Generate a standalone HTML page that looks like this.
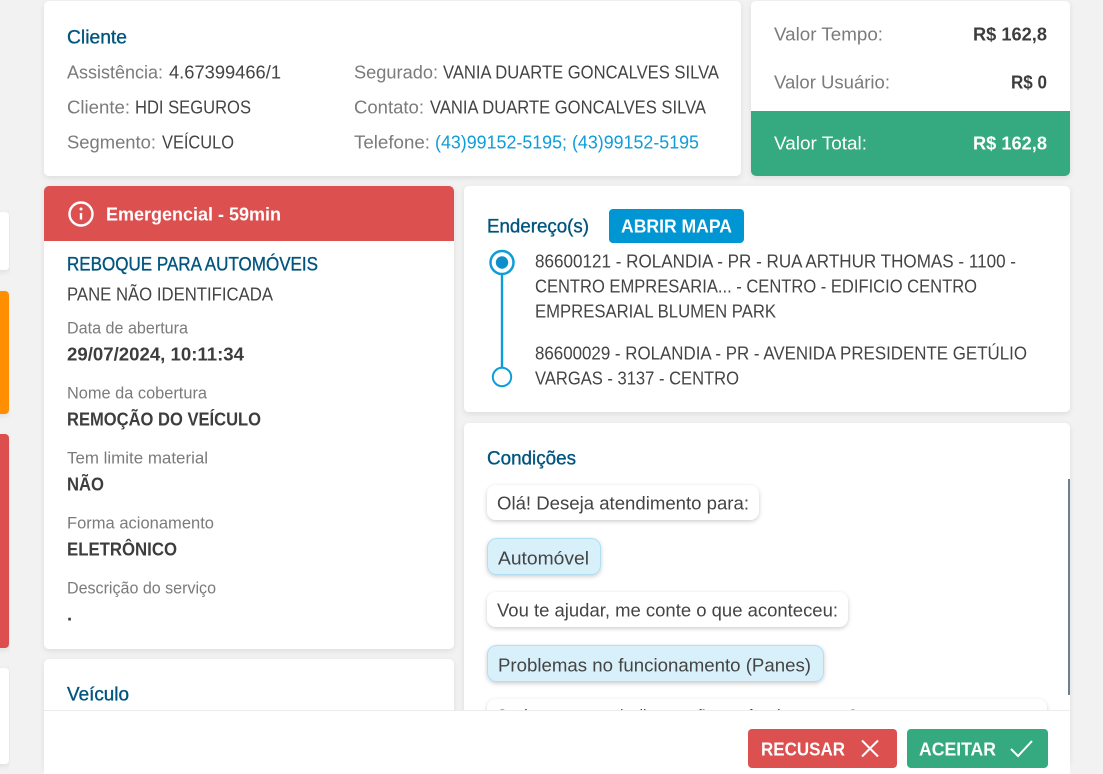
<!DOCTYPE html>
<html lang="pt"><head><meta charset="utf-8"><title>Serviço</title>
<style>
html,body{margin:0;padding:0;background:#f2f2f2;width:1103px;height:774px;overflow:hidden}
svg{position:absolute;left:0;top:0;display:block}
text{font-family:"Liberation Sans",sans-serif;font-size:18.5px;fill:#444;transform:translateY(-.5px)}
.g{fill:#7b7b7b}.h{fill:#00557f;font-size:19px;stroke:#00557f;stroke-width:.35px}
.s{font-size:16.5px;fill:#7b7b7b;transform:translateY(.5px)}.b{font-weight:bold;fill:#3d3d3d}
.w{fill:#fff}.wb{fill:#fff;font-weight:bold}.l{fill:#0e9dd8}
</style></head><body>
<svg width="1103" height="774" viewBox="0 0 1103 774" xmlns="http://www.w3.org/2000/svg">
<defs>
<filter id="sh" x="-5%" y="-5%" width="110%" height="115%"><feDropShadow dx="0" dy="2" stdDeviation="3" flood-color="#000" flood-opacity=".09"/></filter>
<filter id="sb" x="-10%" y="-20%" width="120%" height="150%"><feDropShadow dx="0" dy="1.5" stdDeviation="2" flood-color="#000" flood-opacity=".2"/></filter>
<clipPath id="c1"><rect x="751" y="1" width="319" height="175" rx="5"/></clipPath>
<clipPath id="c2"><rect x="44" y="186" width="410" height="463" rx="5"/></clipPath>
</defs>

<!-- left strip -->
<rect x="-10" y="212" width="19" height="58" rx="4" fill="#fff" filter="url(#sh)"/>
<rect x="-10" y="291" width="19" height="123" rx="4" fill="#ff8f00" filter="url(#sh)"/>
<rect x="-10" y="434" width="19" height="214" rx="4" fill="#dd5050" filter="url(#sh)"/>
<rect x="-10" y="668" width="19" height="96" rx="4" fill="#fff" filter="url(#sh)"/>

<!-- cards -->
<rect x="44" y="1" width="697" height="175" rx="5" fill="#fff" filter="url(#sh)"/>
<rect x="751" y="1" width="319" height="175" rx="5" fill="#fff" filter="url(#sh)"/>
<rect x="751" y="111" width="319" height="65" fill="#35aa80" clip-path="url(#c1)"/>
<rect x="44" y="186" width="410" height="463" rx="5" fill="#fff" filter="url(#sh)"/>
<rect x="44" y="186" width="410" height="55" fill="#dd5050" clip-path="url(#c2)"/>
<rect x="44" y="659" width="410" height="110" rx="5" fill="#fff" filter="url(#sh)"/>
<rect x="464" y="186" width="606" height="226" rx="5" fill="#fff" filter="url(#sh)"/>
<rect x="464" y="423" width="606" height="340" rx="5" fill="#fff" filter="url(#sh)"/>

<!-- cliente -->
<text x="67" y="44" class="h" textLength="60" lengthAdjust="spacingAndGlyphs">Cliente</text>
<text x="67" y="79" class="g" textLength="96" lengthAdjust="spacingAndGlyphs">Assistência:</text>
<text x="169" y="79" textLength="112" lengthAdjust="spacingAndGlyphs">4.67399466/1</text>
<text x="67" y="114" class="g" textLength="63" lengthAdjust="spacingAndGlyphs">Cliente:</text>
<text x="135" y="114" textLength="116" lengthAdjust="spacingAndGlyphs">HDI SEGUROS</text>
<text x="67" y="149" class="g" textLength="89" lengthAdjust="spacingAndGlyphs">Segmento:</text>
<text x="162" y="149" textLength="72" lengthAdjust="spacingAndGlyphs">VEÍCULO</text>
<text x="354" y="79" class="g" textLength="84" lengthAdjust="spacingAndGlyphs">Segurado:</text>
<text x="443" y="79" textLength="276" lengthAdjust="spacingAndGlyphs">VANIA DUARTE GONCALVES SILVA</text>
<text x="354" y="114" class="g" textLength="70" lengthAdjust="spacingAndGlyphs">Contato:</text>
<text x="430" y="114" textLength="276" lengthAdjust="spacingAndGlyphs">VANIA DUARTE GONCALVES SILVA</text>
<text x="354" y="149" class="g" textLength="76" lengthAdjust="spacingAndGlyphs">Telefone:</text>
<text x="435" y="149" class="l" textLength="264" lengthAdjust="spacingAndGlyphs">(43)99152-5195; (43)99152-5195</text>

<!-- valores -->
<text x="774" y="41" class="g" textLength="109" lengthAdjust="spacingAndGlyphs">Valor Tempo:</text>
<text x="973" y="41" class="b" textLength="74" lengthAdjust="spacingAndGlyphs">R$ 162,8</text>
<text x="774" y="89" class="g" textLength="116" lengthAdjust="spacingAndGlyphs">Valor Usuário:</text>
<text x="1011" y="89" class="b" textLength="36" lengthAdjust="spacingAndGlyphs">R$ 0</text>
<text x="774" y="150" class="w" textLength="93" lengthAdjust="spacingAndGlyphs">Valor Total:</text>
<text x="973" y="150" class="wb" textLength="74" lengthAdjust="spacingAndGlyphs">R$ 162,8</text>

<!-- emergencial -->
<circle cx="81" cy="214" r="11.5" fill="none" stroke="#fff" stroke-width="2.4"/>
<path d="M81 213v6.5" stroke="#fff" stroke-width="2.4" fill="none"/>
<circle cx="81" cy="209" r="1.5" fill="#fff"/>
<text x="106" y="221" class="wb" textLength="175" lengthAdjust="spacingAndGlyphs">Emergencial - 59min</text>
<text x="67" y="271" class="h" textLength="251" lengthAdjust="spacingAndGlyphs">REBOQUE PARA AUTOMÓVEIS</text>
<text x="67" y="301" textLength="206" lengthAdjust="spacingAndGlyphs">PANE NÃO IDENTIFICADA</text>
<text x="67" y="333" class="s" textLength="121" lengthAdjust="spacingAndGlyphs">Data de abertura</text>
<text x="67" y="361" class="b" textLength="177" lengthAdjust="spacingAndGlyphs">29/07/2024, 10:11:34</text>
<text x="67" y="398" class="s" textLength="140" lengthAdjust="spacingAndGlyphs">Nome da cobertura</text>
<text x="67" y="426" class="b" textLength="194" lengthAdjust="spacingAndGlyphs">REMOÇÃO DO VEÍCULO</text>
<text x="67" y="463" class="s" textLength="141" lengthAdjust="spacingAndGlyphs">Tem limite material</text>
<text x="67" y="491" class="b" textLength="37" lengthAdjust="spacingAndGlyphs">NÃO</text>
<text x="67" y="528" class="s" textLength="147" lengthAdjust="spacingAndGlyphs">Forma acionamento</text>
<text x="67" y="556" class="b" textLength="110" lengthAdjust="spacingAndGlyphs">ELETRÔNICO</text>
<text x="67" y="593" class="s" textLength="149" lengthAdjust="spacingAndGlyphs">Descrição do serviço</text>
<text x="67" y="621" class="b">.</text>
<text x="67" y="701" class="h" textLength="62" lengthAdjust="spacingAndGlyphs">Veículo</text>

<!-- endereco -->
<text x="487" y="233" class="h" textLength="102" lengthAdjust="spacingAndGlyphs">Endereço(s)</text>
<rect x="609" y="209" width="135" height="34" rx="4" fill="#0095d3"/>
<text x="621" y="233" class="wb" textLength="111" lengthAdjust="spacingAndGlyphs">ABRIR MAPA</text>
<path d="M502 275V368" stroke="#0e9dd8" stroke-width="2.4"/>
<circle cx="502" cy="262.5" r="11.5" fill="#fff" stroke="#0e9dd8" stroke-width="2.5"/>
<circle cx="502" cy="262.5" r="6.2" fill="#0e8fcb"/>
<circle cx="502" cy="377" r="9.2" fill="#fff" stroke="#0e9dd8" stroke-width="2"/>
<text x="535" y="268" textLength="481" lengthAdjust="spacingAndGlyphs">86600121 - ROLANDIA - PR - RUA ARTHUR THOMAS - 1100 -</text>
<text x="535" y="293" textLength="442" lengthAdjust="spacingAndGlyphs">CENTRO EMPRESARIA... - CENTRO - EDIFICIO CENTRO</text>
<text x="535" y="318" textLength="241" lengthAdjust="spacingAndGlyphs">EMPRESARIAL BLUMEN PARK</text>
<text x="535" y="360" textLength="492" lengthAdjust="spacingAndGlyphs">86600029 - ROLANDIA - PR - AVENIDA PRESIDENTE GETÚLIO</text>
<text x="535" y="385" textLength="204" lengthAdjust="spacingAndGlyphs">VARGAS - 3137 - CENTRO</text>

<!-- condicoes -->
<text x="487" y="465" class="h" textLength="89" lengthAdjust="spacingAndGlyphs">Condições</text>
<rect x="1068" y="479" width="2" height="216" fill="#6f7f90"/>
<rect x="487" y="485" width="272" height="35" rx="9" fill="#fff" filter="url(#sb)"/>
<text x="497" y="510" textLength="252" lengthAdjust="spacingAndGlyphs">Olá! Deseja atendimento para:</text>
<rect x="487.5" y="538.5" width="113" height="36" rx="9" fill="#d8f0fa" stroke="#b0def2" filter="url(#sb)"/>
<text x="498" y="565" textLength="91" lengthAdjust="spacingAndGlyphs">Automóvel</text>
<rect x="487" y="592" width="361" height="35" rx="9" fill="#fff" filter="url(#sb)"/>
<text x="497" y="617" textLength="341" lengthAdjust="spacingAndGlyphs">Vou te ajudar, me conte o que aconteceu:</text>
<rect x="487.5" y="645.5" width="336" height="36" rx="9" fill="#d8f0fa" stroke="#b0def2" filter="url(#sb)"/>
<text x="498" y="672" textLength="313" lengthAdjust="spacingAndGlyphs">Problemas no funcionamento (Panes)</text>
<rect x="487" y="699" width="560" height="35" rx="9" fill="#fff" filter="url(#sb)"/>
<text x="497" y="723" textLength="360" lengthAdjust="spacingAndGlyphs">Será que o carro desliga ou não tem funcionamento?</text>

<!-- footer -->
<rect x="44" y="710" width="1026" height="64" fill="#fff"/>
<rect x="44" y="710" width="1026" height="1" fill="#ececec"/>
<rect x="748" y="729" width="149" height="39" rx="4" fill="#dd5050"/>
<text x="761" y="756" class="wb" textLength="84" lengthAdjust="spacingAndGlyphs">RECUSAR</text>
<path d="M862 740.5L878 756.5M878 740.5L862 756.5" stroke="#fff" stroke-width="2" fill="none"/>
<rect x="907" y="729" width="141" height="39" rx="4" fill="#35aa80"/>
<text x="919" y="756" class="wb" textLength="77" lengthAdjust="spacingAndGlyphs">ACEITAR</text>
<path d="M1011 749L1018 756L1032 741" stroke="#fff" stroke-width="2" fill="none"/>
</svg>
</body></html>
